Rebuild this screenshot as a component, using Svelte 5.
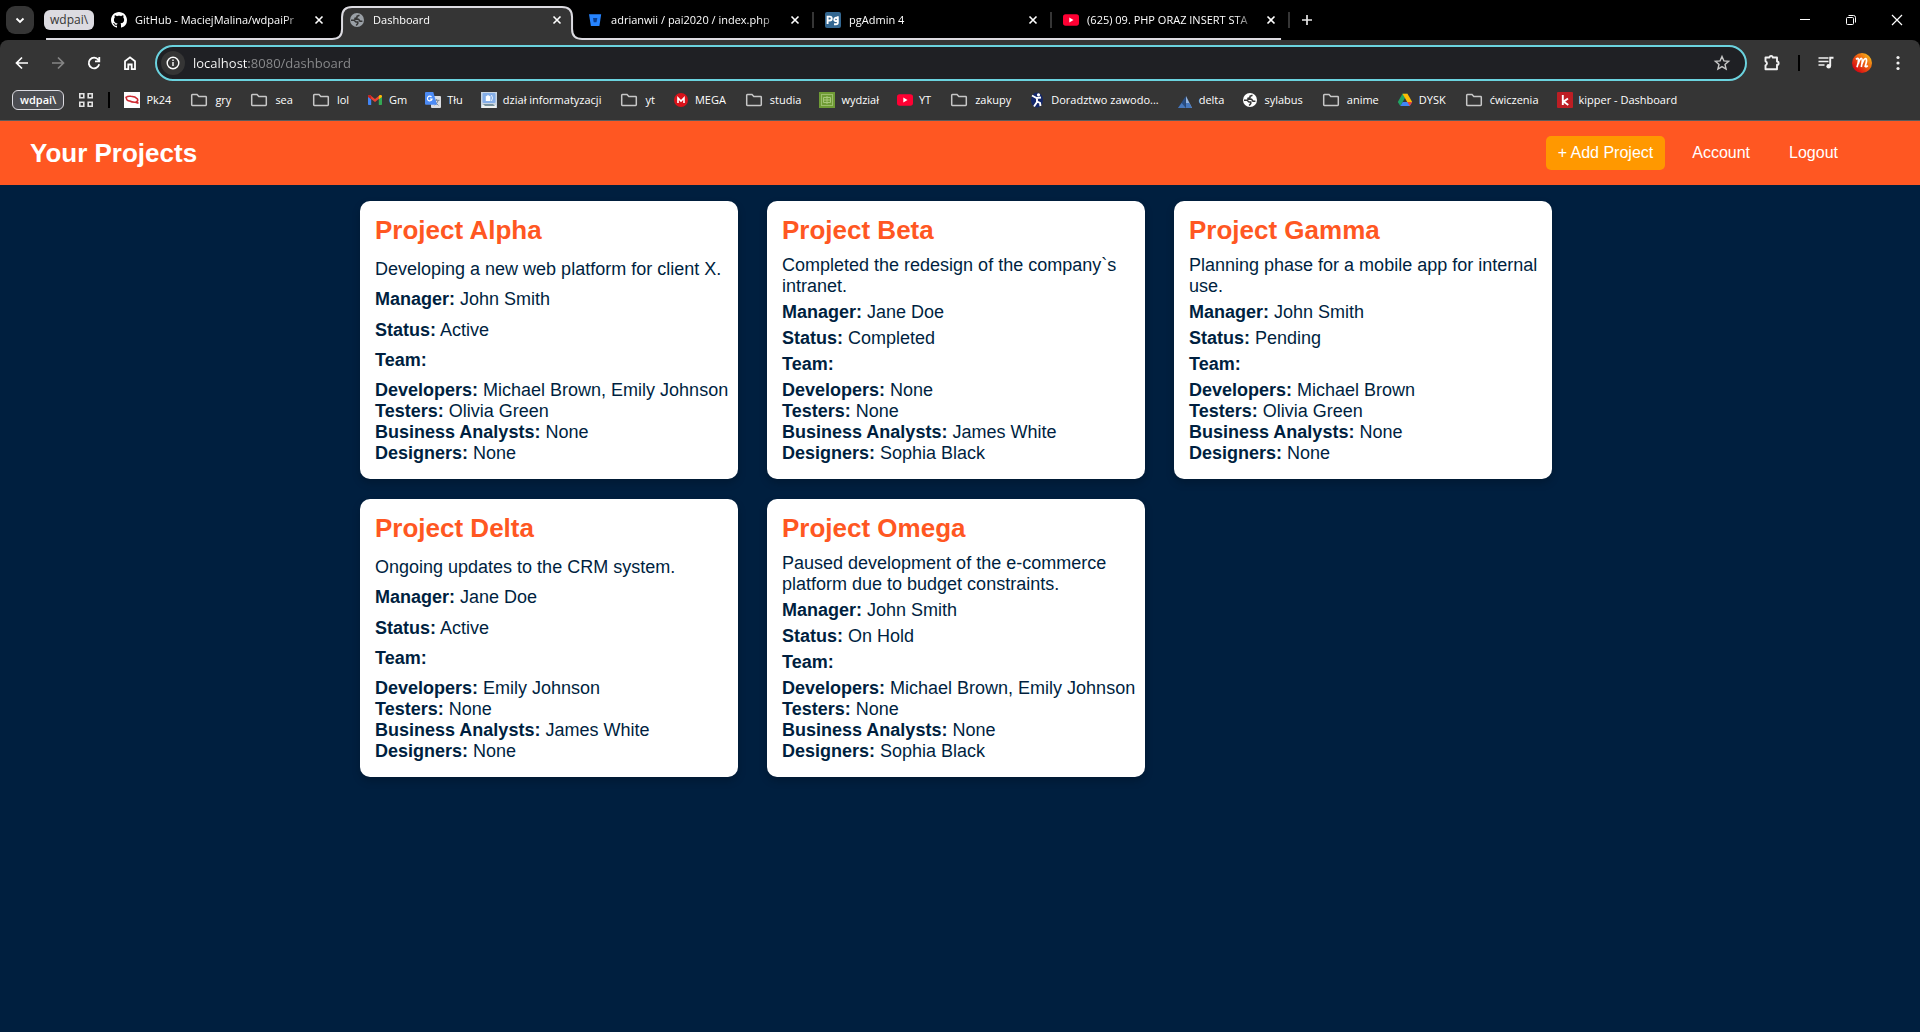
<script>
  const tabs = [
    { icon: 'github', title: 'GitHub - MaciejMalina/wdpaiPr' },
    { icon: 'globe', title: 'Dashboard', active: true },
    { icon: 'bitbucket', title: 'adrianwii / pai2020 / index.php' },
    { icon: 'pgadmin', title: 'pgAdmin 4' },
    { icon: 'youtube', title: '(625) 09. PHP ORAZ INSERT STA' }
  ];

  const bookmarks = [
    { icon: 'pk', label: 'Pk24' },
    { icon: 'folder', label: 'gry' },
    { icon: 'folder', label: 'sea' },
    { icon: 'folder', label: 'lol' },
    { icon: 'gmail', label: 'Gm' },
    { icon: 'translate', label: 'Tłu' },
    { icon: 'computer', label: 'dział informatyzacji' },
    { icon: 'folder', label: 'yt' },
    { icon: 'mega', label: 'MEGA' },
    { icon: 'folder', label: 'studia' },
    { icon: 'chip', label: 'wydział' },
    { icon: 'youtube', label: 'YT' },
    { icon: 'folder', label: 'zakupy' },
    { icon: 'runner', label: 'Doradztwo zawodo...' },
    { icon: 'delta', label: 'delta' },
    { icon: 'globeLight', label: 'sylabus' },
    { icon: 'folder', label: 'anime' },
    { icon: 'drive', label: 'DYSK' },
    { icon: 'folder', label: 'ćwiczenia' },
    { icon: 'kipper', label: 'kipper - Dashboard' }
  ];

  const projects = [
    {
      name: 'Project Alpha',
      description: 'Developing a new web platform for client X.',
      manager: 'John Smith',
      status: 'Active',
      team: { Developers: 'Michael Brown, Emily Johnson', Testers: 'Olivia Green', 'Business Analysts': 'None', Designers: 'None' }
    },
    {
      name: 'Project Beta',
      description: 'Completed the redesign of the company`s intranet.',
      manager: 'Jane Doe',
      status: 'Completed',
      team: { Developers: 'None', Testers: 'None', 'Business Analysts': 'James White', Designers: 'Sophia Black' }
    },
    {
      name: 'Project Gamma',
      description: 'Planning phase for a mobile app for internal use.',
      manager: 'John Smith',
      status: 'Pending',
      team: { Developers: 'Michael Brown', Testers: 'Olivia Green', 'Business Analysts': 'None', Designers: 'None' }
    },
    {
      name: 'Project Delta',
      description: 'Ongoing updates to the CRM system.',
      manager: 'Jane Doe',
      status: 'Active',
      team: { Developers: 'Emily Johnson', Testers: 'None', 'Business Analysts': 'James White', Designers: 'None' }
    },
    {
      name: 'Project Omega',
      description: 'Paused development of the e-commerce platform due to budget constraints.',
      manager: 'John Smith',
      status: 'On Hold',
      team: { Developers: 'Michael Brown, Emily Johnson', Testers: 'None', 'Business Analysts': 'None', Designers: 'Sophia Black' }
    }
  ];

  let address = $state('localhost:8080/dashboard');
</script>

{#snippet favicon(name)}
  {#if name === 'folder'}
    <svg class="icon folder" viewBox="0 0 20 16" aria-hidden="true">
      <path d="M2.700 3.200q0-.7.7-.7h4.600l1.800 2h6.800q.7 0 .7.7v7.600q0 .7-.7.7H3.400q-.7 0-.7-.7z" fill="none" stroke="#c7c7c7" stroke-width="1.500" />
    </svg>
  {:else}
    <svg class="icon" viewBox="0 0 16 16" aria-hidden="true">
      {#if name === 'github'}
        <path fill="#fff" d="M8 0C3.580 0 0 3.580 0 8c0 3.540 2.290 6.530 5.470 7.590.4.070.550-.170.550-.380 0-.190-.010-.820-.010-1.490-2.010.370-2.530-.490-2.690-.940-.090-.230-.480-.940-.820-1.130-.280-.150-.680-.520-.010-.530.630-.010 1.080.580 1.230.820.720 1.210 1.870.870 2.330.660.070-.520.280-.870.510-1.070-1.780-.2-3.640-.890-3.640-3.950 0-.870.310-1.590.820-2.150-.080-.2-.360-1.020.080-2.120 0 0 .670-.210 2.200.820.640-.180 1.320-.270 2-.270s1.360.090 2 .270c1.530-1.040 2.200-.820 2.200-.820.440 1.100.160 1.920.080 2.120.510.560.820 1.270.820 2.150 0 3.070-1.870 3.750-3.650 3.950.290.250.540.730.540 1.480 0 1.070-.010 1.930-.010 2.200 0 .210.150.460.550.380A8.010 8.010 0 0 0 16 8c0-4.420-3.580-8-8-8z" />
      {:else if name === 'globe' || name === 'globeLight'}
        <circle cx="8" cy="8" r="7" fill={name === 'globe' ? '#9aa0a6' : '#fff'} />
        <path d="M10.500 3.300 8 4.200V5.800L6 6.400v.9h3.600l1.400 1.900h2.400M2 8.300h3l2 1.700h1.800v1.500l-1.600 2" fill="none" stroke="#353535" stroke-width="1.500" />
      {:else if name === 'bitbucket'}
        <path fill="#2684ff" d="M2 2.200h12.200L12.400 14H3.900z" />
        <path fill="#0b3f91" d="M6 6h4.300l-.8 4.300H6.700z" />
      {:else if name === 'pgadmin'}
        <rect width="16" height="16" rx="2" fill="#336791" />
        <path d="M2.600 12V4.600h2.200a1.900 1.900 0 0 1 0 3.900H3M12.800 4.300v6.200q0 1.800-1.800 1.800H9M12.500 6.700a1.700 1.700 0 1 0 0 1.500" fill="none" stroke="#fff" stroke-width="1.900" />
      {:else if name === 'youtube'}
        <rect y="2.300" width="16" height="11.400" rx="2.600" fill="#ff0033" />
        <path d="M6.300 5.600v4.800l4.200-2.400z" fill="#fff" />
      {:else if name === 'pk'}
        <rect width="16" height="16" fill="#fff" />
        <path d="M2 5.300q2-1.600 5-1 4.400.2 6.500 2.700.8 1.800-.9 2.700l1.800 1.600-3-1.100q-3.400.2-5.700-1.200-3-.3-3.200-2.300z" fill="none" stroke="#cf2b33" stroke-width="1.500" />
      {:else if name === 'gmail'}
        <path d="M1 4v8.300q0 .7.7.7h2.500V6.400z" fill="#4285f4" />
        <path d="M15 4v8.300q0 .7-.7.7h-2.500V6.400z" fill="#34a853" />
        <path d="M1 4.500q0-2 2-1.400l5 3.800 5-3.800q2-.6 2 1.400L8 10.100z" fill="#ea4335" />
        <path d="M1 4.500q0-2 2-1.400l1.200.9v3.200L1 4.900z" fill="#c5221f" />
        <path d="M15 4.500q0-2-2-1.400l-1.200.9v3.200L15 4.900z" fill="#fbbc04" />
      {:else if name === 'translate'}
        <rect x="6" y="4" width="10" height="12" rx="1" fill="#dadce0" />
        <path d="M8.800 8.300h5.700M11.600 7v1.300m1.700 0q-.8 3-3.700 4.700m.3-3.200 3.600 3.600" stroke="#7a8794" fill="none" />
        <path d="M1 0h7.300l3.700 12.700H1q-1 0-1-1V1q0-1 1-1z" fill="#4c8bf5" />
        <path d="M6.500 5A2.300 2.300 0 1 0 7 7H4.900" fill="none" stroke="#fff" stroke-width="1.200" />
      {:else if name === 'computer'}
        <rect width="16" height="16" fill="#c9d5e2" />
        <rect x="1.500" y="1" width="13" height="10" rx="1" fill="#84aee8" />
        <rect x="4.800" y="4" width="4.500" height="5" fill="#fff" />
        <path d="M5.500 4.300q1-2 3 0M10.500 3q2 3 0 6" stroke="#e9f2ff" fill="none" />
        <path d="M1 13h14v3H1z" fill="#edf0ef" />
        <path d="M2 12h10l2 2H4z" fill="#76909c" />
      {:else if name === 'mega'}
        <circle cx="8" cy="8" r="7" fill="#d9121a" />
        <path d="M5 11V6l3 3 3-3v5" fill="none" stroke="#fff" stroke-width="1.600" />
      {:else if name === 'chip'}
        <rect width="16" height="16" fill="#6f9b35" />
        <rect x="2.500" y="2.500" width="11" height="11" fill="none" stroke="#9cbd6b" />
        <path d="M4.500 5.500h7v5h-7zM8 4v8M4 8h8" fill="none" stroke="#a7c778" />
      {:else if name === 'runner'}
        <ellipse cx="8" cy="8" rx="6" ry="7.500" fill="#14276a" />
        <circle cx="9.500" cy="2.800" r="1.600" fill="#fff" />
        <path d="M3 3.500 7.500 6l4.500-.5M8 6v4l-3 4.500M8 9.500l3 1.500.5 3" fill="none" stroke="#fff" stroke-width="1.900" />
      {:else if name === 'delta'}
        <path d="M8.800 4v12H1z" fill="#284d83" />
        <path d="M9 4l6 12H9z" fill="#96b6e1" />
        <path d="M4.700 11 8.800 16H1zM9 11l3.500 0L15 16H9z" fill="#4778bd" />
      {:else if name === 'drive'}
        <path d="M5.500 1.800h5L7.700 6.500 3.300 14 .8 10z" fill="#20a464" />
        <path d="M5.500 1.800h5l4.700 8.200h-5z" fill="#fbbc04" />
        <path d="M3.300 14 5.700 10h9.500l-2.500 4z" fill="#4285f4" />
        <path d="M12.700 14 10.300 10h4.900z" fill="#ea4335" />
      {:else if name === 'kipper'}
        <rect width="16" height="16" rx="1" fill="#bd1e24" />
        <path d="M5.800 3v10M11 6.500 6.500 9.600 11.300 13" fill="none" stroke="#fff" stroke-width="1.900" />
      {/if}
    </svg>
  {/if}
{/snippet}

<div class="window">
  <div class="browser">
    <div class="tab-strip">
      <button class="tab-search" aria-label="Search tabs">
        <svg viewBox="0 0 28 28"><path d="m10.500 12.500 3.500 3.500 3.500-3.500" fill="none" stroke="#fff" stroke-width="1.800" /></svg>
      </button>
      <div class="tab-group">
        <svg class="group-line" viewBox="44 0 1246 40" aria-hidden="true">
          <path d="M332 40Q342 40 342 30V17Q342 7 352 7H562Q572 7 572 17V30Q572 40 582 40z" fill="#353535" />
          <path d="M46 39H332Q342 39 342 29V17Q342 7 352 7H562Q572 7 572 17V29Q572 39 582 39H1281" fill="none" stroke="#dcdbe1" stroke-width="2" />
        </svg>
        <button class="group-chip">wdpai\</button>
        {#each tabs as tab}
          <div class="tab" class:active={tab.active}>
            <button class="tab-main">
              {@render favicon(tab.icon)}
              <span class="tab-title">{tab.title}</span>
            </button>
            <button class="tab-close" aria-label="Close tab">
              <svg viewBox="0 0 16 16"><path d="m4.500 4.500 7 7m0-7-7 7" stroke="#fff" stroke-width="1.600" /></svg>
            </button>
          </div>
        {/each}
      </div>
      <button class="new-tab" aria-label="New tab">
        <svg viewBox="0 0 28 28"><path d="M14 9v10M9 14h10" stroke="#e6e6e6" stroke-width="1.700" /></svg>
      </button>
      <div class="window-controls">
        <button aria-label="Minimize"><svg viewBox="0 0 16 16"><path d="M3 7.500h10" stroke="#fff" /></svg></button>
        <button aria-label="Restore">
          <svg viewBox="0 0 16 16">
            <rect x="3.500" y="5.500" width="7" height="7" rx="1" fill="none" stroke="#fff" />
            <path d="M5.500 3.500h5q2 0 2 2v5" fill="none" stroke="#fff" />
          </svg>
        </button>
        <button aria-label="Close"><svg viewBox="0 0 16 16"><path d="m3 3 10 10m0-10L3 13" stroke="#fff" stroke-width="1.200" /></svg></button>
      </div>
    </div>

    <div class="toolbar">
      <div class="address-row">
        <div class="nav-buttons">
          <button aria-label="Back"><svg viewBox="0 0 20 20"><path d="M16 10H5m5-5.500L4.500 10l5.500 5.500" fill="none" stroke="#fff" stroke-width="1.700" /></svg></button>
          <button aria-label="Forward"><svg viewBox="0 0 20 20"><path d="M4 10h11m-5-5.500 5.500 5.500-5.500 5.500" fill="none" stroke="#858585" stroke-width="1.700" /></svg></button>
          <button aria-label="Reload"><svg viewBox="0 0 20 20"><path d="M15.200 11.300A5.300 5.300 0 1 1 14.300 6.800l1 1.200M15.300 4v4.300H11" fill="none" stroke="#fff" stroke-width="1.800" /></svg></button>
          <button aria-label="Home"><svg viewBox="0 0 20 20"><path d="M5 16.200V8.200L10 4.300l5 3.900v8h-3.300v-4.700H8.300v4.700z" fill="none" stroke="#fff" stroke-width="1.800" /></svg></button>
        </div>
        <div class="omnibox">
          <button class="site-info" aria-label="View site information">
            <svg viewBox="0 0 24 24">
              <circle cx="12" cy="12" r="5.800" fill="none" stroke="#fff" stroke-width="1.400" />
              <path d="M12 11v4M12 8.500v1.500" stroke="#fff" stroke-width="1.400" />
            </svg>
          </button>
          <input class="address" type="text" aria-label="Address" bind:value={address} />
          <button class="plain" aria-label="Bookmark this page">
            <svg viewBox="0 0 20 20"><path d="m10 3.500 1.900 4.400 4.700.4-3.600 3.100 1.100 4.700L10 13.600l-4.100 2.500L7 11.400 3.400 8.300l4.700-.4z" fill="none" stroke="#c7c7c7" stroke-width="1.400" /></svg>
          </button>
        </div>
        <div class="toolbar-actions">
          <button class="plain" aria-label="Extensions">
            <svg viewBox="0 0 20 20"><path d="M3.500 4.500h4a1.600 1.600 0 0 1 3.200 0h4.300v4a1.600 1.600 0 0 1 0 3.300v4.400H3.500v-3.900a2.100 2.100 0 0 0 0-4z" fill="none" stroke="#f1f1f1" stroke-width="1.900" stroke-linejoin="round" /></svg>
          </button>
          <span class="divider"></span>
          <button class="plain" aria-label="Media controls">
            <svg viewBox="0 0 20 20">
              <path d="M2.500 5h10M2.500 8.500h10M2.500 12h6" stroke="#f1f1f1" stroke-width="1.700" />
              <path d="M14.200 13V4.800h3.300" fill="none" stroke="#f1f1f1" stroke-width="1.900" />
              <circle cx="12.700" cy="13.300" r="2.300" fill="#f1f1f1" />
            </svg>
          </button>
          <button class="plain" aria-label="Profile">
            <svg viewBox="0 0 20 20">
              <defs>
                <linearGradient id="avatar" x1="0" y1="1" x2="1" y2="0">
                  <stop offset="0.200" stop-color="#d80f12" />
                  <stop offset="0.600" stop-color="#ee6a10" />
                  <stop offset="1" stop-color="#f6d321" />
                </linearGradient>
              </defs>
              <circle cx="10" cy="10" r="10" fill="url(#avatar)" />
              <path d="M4 6.300Q6.500 4 6.500 7T5 14.300M6.200 11Q8 5 9.500 5.500T9.300 14M10 11Q12 5 13.800 5.600t-.6 7.700q1.300 1 2.500-.8" fill="none" stroke="#fff" stroke-width="1.700" />
            </svg>
          </button>
          <button class="plain" aria-label="Menu">
            <svg viewBox="0 0 20 20" fill="#f1f1f1"><circle cx="10" cy="4.500" r="1.600" /><circle cx="10" cy="10" r="1.600" /><circle cx="10" cy="15.500" r="1.600" /></svg>
          </button>
        </div>
      </div>

      <div class="bookmark-row">
        <button class="saved-group">wdpai\</button>
        <button class="apps" aria-label="Apps">
          <svg viewBox="0 0 14 14" fill="none" stroke="#e3e3e3" stroke-width="1.600">
            <path d="M.8.8h4v4h-4zM9.200.8h4v4h-4zM.8 9.200h4v4h-4zM9.200 9.200h4v4h-4z" />
          </svg>
        </button>
        <span class="divider"></span>
        <nav class="bookmarks" aria-label="Bookmarks">
          {#each bookmarks as mark}
            <a class="bookmark" href="#bookmark">{@render favicon(mark.icon)}<span>{mark.label}</span></a>
          {/each}
        </nav>
      </div>
    </div>
  </div>

  <header class="site-header">
    <h1>Your Projects</h1>
    <nav class="site-nav">
      <button class="nav-item add">+ Add Project</button>
      <a class="nav-item" href="#account">Account</a>
      <a class="nav-item" href="#logout">Logout</a>
    </nav>
  </header>

  <main class="projects">
    {#each projects as project}
      <article class="card">
        <h2>{project.name}</h2>
        <p>{project.description}</p>
        <p><strong>Manager:</strong> {project.manager}</p>
        <p><strong>Status:</strong> {project.status}</p>
        <p><strong>Team:</strong></p>
        <ul>
          {#each Object.entries(project.team) as [role, people]}
            <li><strong>{role}:</strong> {people}</li>
          {/each}
        </ul>
      </article>
    {/each}
  </main>
</div>

<style>
  :global(body) {
    margin: 0;
    background: #001f3f;
  }

  .window {
    min-height: 100vh;
    font-family: Arial, 'Liberation Sans', sans-serif;
    color: #001f3f;
  }

  button {
    margin: 0;
    padding: 0;
    border: 0;
    background: none;
    color: inherit;
    font: inherit;
    cursor: pointer;
  }

  a {
    color: inherit;
    text-decoration: none;
  }

  svg {
    display: block;
    flex: none;
  }

  .browser {
    background: #000;
    color: #fff;
    font-family: 'Segoe UI', 'Open Sans', 'Noto Sans', sans-serif;
    font-size: 11px;
    line-height: 16px;
    white-space: nowrap;
  }

  .icon {
    width: 16px;
    height: 16px;
  }

  .icon.folder {
    width: 20px;
  }

  /* Tab strip */
  .tab-strip {
    display: flex;
    align-items: center;
    height: 40px;
    padding-left: 6px;
  }

  .tab-search {
    width: 28px;
    height: 28px;
    margin-right: 10px;
    border-radius: 9px;
    background: #353535;
  }

  .tab-group {
    position: relative;
    display: flex;
    align-items: center;
    height: 40px;
  }

  .group-line {
    position: absolute;
    inset: 0;
    width: 100%;
    height: 100%;
  }

  .group-chip {
    position: relative;
    height: 20px;
    margin-right: 6px;
    padding: 0 6px;
    border-radius: 6px;
    background: #dcdbe1;
    color: #353535;
    font-size: 12px;
    line-height: 20px;
  }

  .tab {
    position: relative;
    display: flex;
    align-items: center;
    box-sizing: border-box;
    width: 238px;
    height: 16px;
    padding: 0 11px;
  }

  .tab:nth-of-type(n + 3) {
    padding-right: 9px;
    border-right: 2px solid #353535;
  }

  .tab-main {
    display: flex;
    flex: 1;
    align-items: center;
    gap: 8px;
    min-width: 0;
    text-align: left;
  }

  .tab-title {
    flex: 1;
    mask-image: linear-gradient(to right, #000 88%, transparent);
  }

  .tab-close {
    width: 16px;
    height: 16px;
    margin-left: 7px;
  }

  .new-tab {
    width: 28px;
    height: 28px;
    margin-left: 3px;
  }

  .window-controls {
    display: flex;
    margin-left: auto;
  }

  .window-controls button {
    display: grid;
    place-items: center;
    width: 46px;
    height: 40px;
  }

  .window-controls svg {
    width: 16px;
    height: 16px;
  }

  /* Toolbar */
  .toolbar {
    padding: 5px 0 1px;
    border-bottom: 1px solid #5c5c5c;
    border-radius: 8px 8px 0 0;
    background: #353535;
  }

  .address-row {
    display: flex;
    align-items: center;
    padding: 0 12px;
  }

  .nav-buttons {
    display: flex;
    gap: 16px;
    margin-right: 15px;
  }

  .nav-buttons svg,
  .plain svg {
    width: 20px;
    height: 20px;
  }

  .omnibox {
    display: flex;
    flex: 1;
    align-items: center;
    box-sizing: border-box;
    height: 36px;
    padding: 0 13px 0 4px;
    border: 2px solid #6bd3df;
    border-radius: 18px;
    background: #1f2024;
  }

  .site-info {
    width: 24px;
    height: 24px;
    border-radius: 50%;
    background: #353535;
  }

  .address {
    flex: 1;
    min-width: 0;
    height: 24px;
    margin: 0;
    padding: 0 8px;
    border: 0;
    outline: 0;
    background: linear-gradient(to right, #fff 64px, #8b8c8e 64px);
    background-clip: text;
    color: transparent;
    font-family: inherit;
    font-size: 13px;
  }

  .toolbar-actions {
    display: flex;
    align-items: center;
    gap: 16px;
    margin-left: 15px;
  }

  .divider {
    width: 2px;
    height: 16px;
    background: #000;
  }

  .bookmark-row {
    display: flex;
    align-items: center;
    height: 38px;
    padding: 0 12px;
  }

  .saved-group {
    height: 20px;
    padding: 0 7px;
    border: 1px solid #dcdbe1;
    border-radius: 6px;
    background: #4b4c51;
    font-weight: 600;
    line-height: 18px;
  }

  .apps {
    width: 14px;
    margin: 0 15px;
  }

  .bookmarks {
    display: flex;
    gap: 18px;
    margin-left: 14px;
  }

  .bookmark {
    display: flex;
    align-items: center;
    gap: 6px;
  }

  /* Site */
  .site-header {
    display: flex;
    align-items: center;
    justify-content: space-between;
    box-sizing: border-box;
    height: 64px;
    padding: 0 70px 0 30px;
    background: #ff5722;
    color: #fff;
  }

  h1,
  h2 {
    margin: 0;
    font-size: 26px;
    line-height: 29px;
  }

  .site-nav {
    display: flex;
    gap: 15px;
    font-size: 16px;
    line-height: 18px;
  }

  .nav-item {
    padding: 8px 12px;
    border-radius: 5px;
  }

  .add {
    background: #ff9800;
  }

  .projects {
    display: grid;
    grid-template-columns: repeat(auto-fill, 378px);
    gap: 20px 29px;
    max-width: 1200px;
    margin: 0 auto;
    padding: 16px 0;
  }

  .card {
    display: flex;
    flex-direction: column;
    justify-content: space-between;
    gap: 5px;
    box-sizing: border-box;
    min-height: 278px;
    padding: 15px 8px 15px 15px;
    border-radius: 10px;
    background: #fff;
    box-shadow: 0 4px 8px rgba(0, 0, 0, 0.2);
    font-size: 18px;
    line-height: 21px;
  }

  h2 {
    margin-bottom: 5px;
    color: #ff5722;
  }

  p,
  ul {
    margin: 0;
    padding: 0;
    list-style: none;
  }
</style>
